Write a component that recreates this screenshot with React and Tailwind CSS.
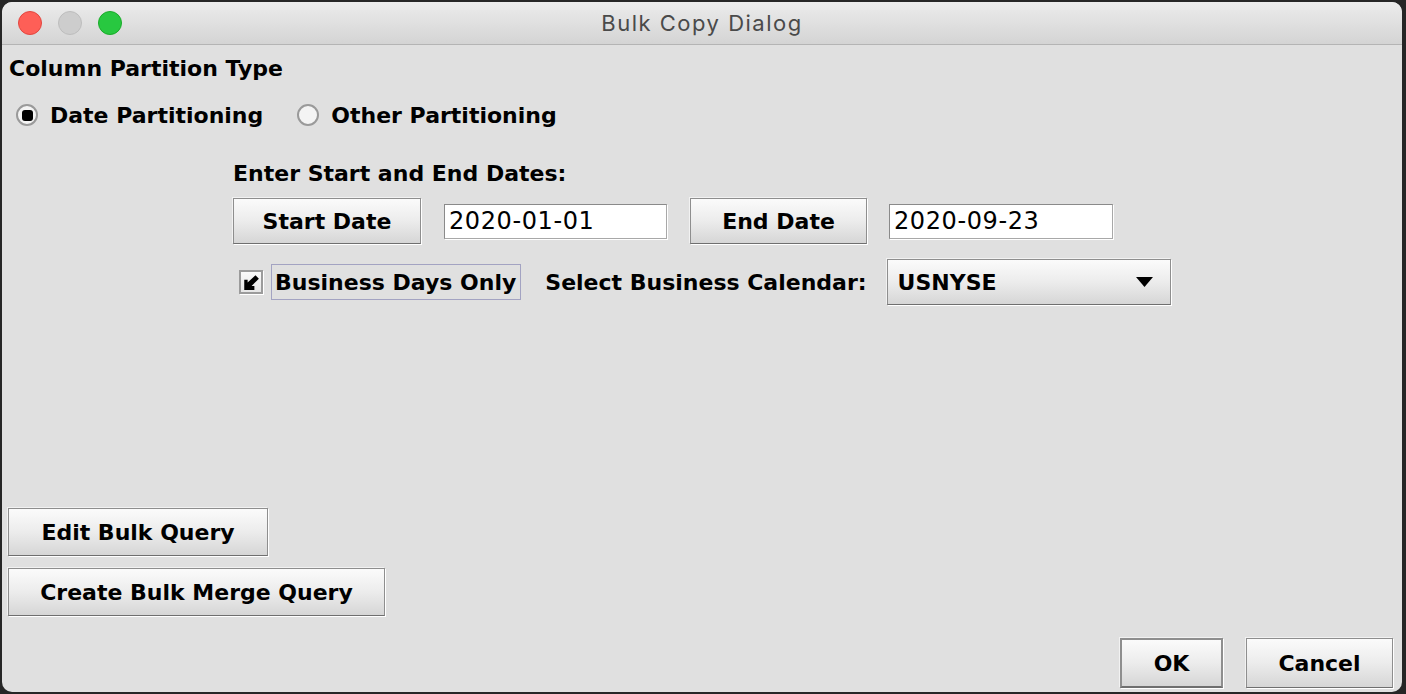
import React from "react";

const FONT = { fontFamily: '"DejaVu Sans", "Liberation Sans", sans-serif' };

const AquaButton = ({ label, className = "" }) => (
  <button
    className={`flex items-center justify-center border border-[#8e8e8e] border-b-[#6f6f6f] bg-gradient-to-b from-[#fbfbfb] via-[#ececec] to-[#d6d6d6] text-[22px] font-bold text-black shadow-[1px_1px_0_#ffffff,-1px_-1px_0_#f2f2f2] ${className}`}
  >
    {label}
  </button>
);

const TextField = ({ value, className = "" }) => (
  <div
    className={`flex items-center border border-[#8a8a8a] border-r-[#a8a8a8] border-b-[#a8a8a8] bg-white pl-[4px] text-[24px] tracking-[0.6px] text-black shadow-[1px_1px_0_#ffffff] ${className}`}
  >
    {value}
  </div>
);

const Radio = ({ checked, label }) => (
  <div className="flex items-center">
    <div className="flex h-[22px] w-[22px] items-center justify-center rounded-full border-2 border-[#9a9a9a] bg-[#f4f4f4]">
      {checked && <div className="h-[11px] w-[11px] rounded-[3px] bg-black" />}
    </div>
    <span className="ml-[12px] text-[22px] font-bold text-black">{label}</span>
  </div>
);

export default function App() {
  return (
    <div className="min-h-screen bg-[#262626] p-[2px]" style={FONT}>
      <div className="flex h-[690px] w-[1400px] flex-col overflow-hidden rounded-[10px] bg-[#e0e0e0]">
        {/* title bar */}
        <div className="relative flex h-[43px] shrink-0 items-center border-b border-[#b4b4b4] bg-gradient-to-b from-[#ececec] to-[#d4d4d4]">
          <div className="ml-[16px] flex gap-[16px]">
            <div className="h-[24px] w-[24px] rounded-full bg-[#fe5f57] border border-[#e2463f]" />
            <div className="h-[24px] w-[24px] rounded-full bg-[#cdcdcd] border border-[#bdbdbd]" />
            <div className="h-[24px] w-[24px] rounded-full bg-[#28c840] border border-[#1aab29]" />
          </div>
          <div
            className="absolute inset-0 flex items-center justify-center text-[22px] tracking-[1.5px] text-[#4a4a4a]"
            style={{ fontFamily: 'Inter, "Liberation Sans", sans-serif' }}
          >
            Bulk Copy Dialog
          </div>
        </div>

        {/* content */}
        <div className="flex flex-1 flex-col pl-[7px] pr-[9px]">
          <div className="mt-[10px] flex h-[26px] items-center text-[22px] font-bold text-black">
            Column Partition Type
          </div>

          <div className="mt-[20px] flex h-[28px] items-center pl-[7px]">
            <Radio checked label="Date Partitioning" />
            <div className="ml-[34px]">
              <Radio label="Other Partitioning" />
            </div>
          </div>

          <div className="ml-[224px] flex flex-col">
            <div className="mt-[31px] flex h-[26px] items-center text-[22px] font-bold text-black">
              Enter Start and End Dates:
            </div>

            <div className="mt-[12px] flex items-center">
              <AquaButton label="Start Date" className="h-[46px] w-[188px]" />
              <TextField value="2020-01-01" className="ml-[23px] h-[35px] w-[223px]" />
              <AquaButton label="End Date" className="ml-[23px] h-[46px] w-[177px]" />
              <TextField value="2020-09-23" className="ml-[22px] h-[35px] w-[224px]" />
            </div>

            <div className="mt-[15px] flex h-[46px] items-center">
              <div className="ml-[6px] flex h-[24px] w-[24px] items-center justify-center border-2 border-[#9b9b9b] bg-gradient-to-b from-[#fafafa] to-[#e6e6e6] shadow-[1px_1px_0_#ffffff]">
                <svg width="18" height="18" viewBox="0 0 16 16">
                  <path d="M12 2 L15 5 L8.5 11.5 L11 11.5 L11 15 L2 15 L2 6 L5 6 L5 8.5 Z" fill="#000" />
                </svg>
              </div>
              <div className="ml-[8px] flex h-[36px] items-center border border-[#a3a3c2] pl-[3px] pr-[4px] text-[22px] font-bold text-black">
                Business Days Only
              </div>
              <span className="ml-[24px] text-[22px] font-bold text-black">
                Select Business Calendar:
              </span>
              <div className="ml-[20px] flex h-[46px] w-[284px] items-center justify-between border border-[#8e8e8e] border-b-[#6f6f6f] bg-gradient-to-b from-[#fbfbfb] via-[#ececec] to-[#d6d6d6] pl-[10px] pr-[17px] text-[22px] font-bold text-black shadow-[1px_1px_0_#ffffff,-1px_-1px_0_#f2f2f2]">
                <span>USNYSE</span>
                <svg width="17" height="10" viewBox="0 0 17 10">
                  <path d="M0 0 L17 0 L8.5 10 Z" fill="#000" />
                </svg>
              </div>
            </div>
          </div>

          <div className="flex-1" />

          <div className="flex flex-col items-start gap-[12px]">
            <AquaButton label="Edit Bulk Query" className="-ml-[1px] h-[48px] w-[260px]" />
            <AquaButton label="Create Bulk Merge Query" className="-ml-[1px] h-[48px] w-[377px]" />
          </div>

          <div className="mt-[22px] mb-[4px] flex justify-end gap-[23px]">
            <AquaButton label="OK" className="h-[50px] w-[103px] border-2 border-[#7d7d7d]" />
            <AquaButton label="Cancel" className="h-[50px] w-[147px]" />
          </div>
        </div>
      </div>
    </div>
  );
}
